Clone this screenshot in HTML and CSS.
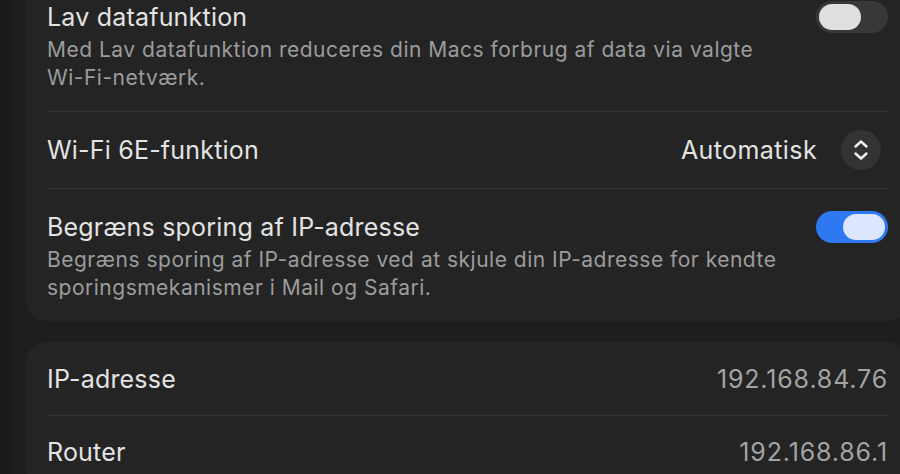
FILE: index.html
```html
<!DOCTYPE html>
<html lang="da">
<head>
<meta charset="utf-8">
<link rel="stylesheet" href="styles.css">
</head>
<body>
<div class="window">
  <div class="edge"></div>
  <main class="content">
    <section class="card card-top">
      <div class="row row-text">
        <div class="text">
          <div class="title">Lav datafunktion</div>
          <div class="sub">Med Lav datafunktion reduceres din Macs forbrug af data via valgte Wi-Fi-netværk.</div>
        </div>
        <div class="toggle off"><span class="knob"></span></div>
      </div>
      <div class="row row-select">
        <div class="title">Wi-Fi 6E-funktion</div>
        <div class="select">
          <span class="select-value">Automatisk</span>
          <span class="stepper">
            <svg width="16" height="22" viewBox="0 0 16 22"><path d="M2.5 7.5 L8 2.5 L13.5 7.5" fill="none" stroke="#f2f2f2" stroke-width="2.4" stroke-linecap="round" stroke-linejoin="round"/><path d="M2.5 14.5 L8 19.5 L13.5 14.5" fill="none" stroke="#f2f2f2" stroke-width="2.4" stroke-linecap="round" stroke-linejoin="round"/></svg>
          </span>
        </div>
      </div>
      <div class="row row-text">
        <div class="text">
          <div class="title">Begræns sporing af IP-adresse</div>
          <div class="sub">Begræns sporing af IP-adresse ved at skjule din IP-adresse for kendte sporingsmekanismer i Mail og Safari.</div>
        </div>
        <div class="toggle on"><span class="knob"></span></div>
      </div>
    </section>
    <section class="card card-info">
      <div class="row row-info">
        <div class="title">IP-adresse</div>
        <div class="value">192.168.84.76</div>
      </div>
      <div class="row row-info">
        <div class="title">Router</div>
        <div class="value">192.168.86.1</div>
      </div>
    </section>
  </main>
</div>
</body>
</html>
```

FILE: styles.css
```css
* { box-sizing: border-box; }
html, body {
  margin: 0;
  padding: 0;
  height: 100%;
  overflow: hidden;
  background: #1e1e1e;
  font-family: Inter, "Noto Sans", "Liberation Sans", sans-serif;
  -webkit-font-smoothing: antialiased;
}
.window {
  display: flex;
  height: 474px;
  width: 900px;
  overflow: hidden;
}
.edge {
  flex: 0 0 14px;
  background: linear-gradient(to right, #1a1a1a, #1c1c1c 70%, #1e1e1e);
}
.content {
  flex: 0 0 895px;
  padding-left: 12px;
  display: flex;
  flex-direction: column;
  gap: 21px;
}
.card {
  background: #242424;
  border-radius: 20px;
  padding: 0 21px;
}
.card-top {
  margin-top: -21px;
}
.row {
  display: flex;
  justify-content: space-between;
  border-top: 1px solid #333333;
}
.row:first-child { border-top: none; }
.row-text {
  align-items: flex-start;
  padding: 23px 0 19px;
}
.title {
  color: #e3e3e3;
  font-size: 25px;
  line-height: 30px;
  letter-spacing: 0.2px;
}
.sub {
  color: #9c9c9c;
  font-size: 21px;
  line-height: 28px;
  margin-top: 4px;
  max-width: 745px;
  letter-spacing: 0.5px;
}
.toggle {
  flex: 0 0 72px;
  height: 32px;
  border-radius: 16px;
  position: relative;
  margin-top: -1px;
}
.toggle.off { background: #383838; }
.toggle.on { background: #2e78f2; }
.knob {
  position: absolute;
  top: 3px;
  width: 42px;
  height: 26px;
  border-radius: 13px;
}
.toggle.off .knob { left: 3px; background: #e0e0e0; }
.toggle.on .knob { right: 3px; background: #dce7fd; }
.row-select {
  align-items: center;
  padding: 18px 0;
}
.select {
  display: flex;
  align-items: center;
  gap: 24px;
  padding-right: 7px;
}
.select-value {
  color: #e3e3e3;
  font-size: 25px;
  line-height: 30px;
  letter-spacing: 0.4px;
}
.stepper {
  width: 40px;
  height: 40px;
  border-radius: 50%;
  background: #333333;
  display: flex;
  align-items: center;
  justify-content: center;
}
.stepper svg { display: block; }
.row-info {
  align-items: center;
  padding: 22px 0;
  height: 73px;
}
.value {
  color: #a3a3a3;
  font-size: 25px;
  line-height: 30px;
  letter-spacing: 0.85px;
}
```
